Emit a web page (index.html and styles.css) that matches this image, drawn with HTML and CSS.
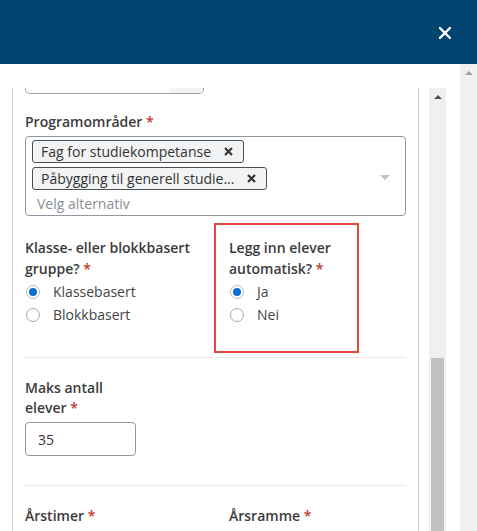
FILE: index.html
```html
<!DOCTYPE html>
<html>
<head>
  <title>Ny gruppe</title>
  <meta name="viewport" content="width=device-width, initial-scale=1">
  <link rel="stylesheet" href="styles.css">
</head>
<body>
  <header class="modal-header">
    <button class="close" aria-label="Lukk">
      <svg width="12" height="12" viewBox="0 0 12 12"><path d="M1 1L11 11M11 1L1 11" stroke="#fff" stroke-width="2.4" stroke-linecap="square"/></svg>
    </button>
  </header>

  <div class="modal-body">
    <div class="scroll-area">
      <div class="panel">
        <div class="input-tail"><span class="tail-addon"></span></div>

        <div class="field">
          <label class="label">Programområder <span class="req">*</span></label>
          <div class="multiselect">
            <div class="tags">
              <span class="tag">Fag for studiekompetanse <i class="tag-x"><svg width="9" height="9" viewBox="0 0 9 9"><path d="M1 1L8 8M8 1L1 8" stroke="#333" stroke-width="2.1"/></svg></i></span>
              <span class="tag">Påbygging til generell studie... <i class="tag-x"><svg width="9" height="9" viewBox="0 0 9 9"><path d="M1 1L8 8M8 1L1 8" stroke="#333" stroke-width="2.1"/></svg></i></span>
              <span class="placeholder">Velg alternativ</span>
            </div>
            <span class="caret"></span>
          </div>
        </div>

        <div class="two-col">
          <div class="field">
            <label class="label">Klasse- eller blokkbasert <span class="keep">gruppe? <span class="req">*</span></span></label>
            <div class="radios">
              <label class="radio"><span class="dot checked"></span>Klassebasert</label>
              <label class="radio"><span class="dot"></span>Blokkbasert</label>
            </div>
          </div>
          <div class="field marked">
            <label class="label">Legg inn elever <span class="keep">automatisk? <span class="req">*</span></span></label>
            <div class="radios">
              <label class="radio"><span class="dot checked"></span>Ja</label>
              <label class="radio"><span class="dot"></span>Nei</label>
            </div>
          </div>
        </div>

        <hr class="divider">

        <div class="field narrow">
          <label class="label">Maks antall <span class="keep">elever <span class="req">*</span></span></label>
          <input class="text-input" type="text" value="35">
        </div>

        <hr class="divider second">

        <div class="two-col">
          <div class="field"><label class="label">Årstimer <span class="req">*</span></label></div>
          <div class="field"><label class="label">Årsramme <span class="req">*</span></label></div>
        </div>
      </div>

      <div class="scrollbar inner">
        <span class="arrow"></span>
        <span class="thumb"></span>
      </div>
    </div>

    <div class="scrollbar outer">
      <span class="arrow"></span>
    </div>
  </div>
</body>
</html>
```

FILE: styles.css
```css
body {
  margin: 0;
  font-family: "Open Sans", Arial, sans-serif;
  color: #3b3b3b;
  height: 531px;
  overflow: hidden;
}
.modal-header {
  height: 64px;
  background-color: #01446f;
  display: flex;
  align-items: center;
  justify-content: flex-end;
  padding-right: 26px;
}
.close {
  background: none;
  border: none;
  padding: 0;
  display: flex;
  margin-top: 1px;
}
.modal-body {
  display: flex;
  height: 467px;
}
.scroll-area {
  display: flex;
  width: 460px;
  padding: 24px 0 0 12px;
  box-sizing: border-box;
}
.panel {
  width: 407px;
  border-left: 1px solid #d2d2d2;
  border-right: 1px solid #d2d2d2;
  padding: 0 12px;
  box-sizing: border-box;
  overflow: hidden;
}
.input-tail {
  width: 179px;
  height: 6px;
  border: 1px solid #9aa3ad;
  border-top: none;
  border-radius: 0 0 5px 5px;
  box-sizing: border-box;
  display: flex;
  justify-content: flex-end;
  overflow: hidden;
}
.tail-addon {
  width: 34px;
  background-color: #f3f3f3;
}
.label {
  display: block;
  font-size: 14px;
  font-weight: 600;
  line-height: 21px;
  color: #3b3b3b;
}
.keep {
  display: inline-block;
  white-space: nowrap;
}
.req {
  color: #c0392b;
}
.input-tail + .field {
  margin-top: 17px;
}
.multiselect {
  margin-top: 4px;
  border: 1px solid #8c98a4;
  border-radius: 4px;
  display: flex;
  align-items: center;
  padding: 3px 6px 1px 6px;
}
.tags {
  flex: 1;
  display: flex;
  flex-direction: column;
  align-items: flex-start;
  gap: 4px;
}
.tag {
  display: flex;
  align-items: center;
  height: 23px;
  box-sizing: border-box;
  padding: 0 10px 0 8px;
  border: 1px solid #4a4f55;
  border-radius: 3px;
  background-color: #f1f3f5;
  font-size: 14px;
  color: #333;
}
.tag-x {
  display: flex;
  margin-left: 13px;
}
.placeholder {
  font-size: 14px;
  line-height: 20px;
  color: #8a8f94;
  padding-left: 5px;
}
.caret {
  width: 0;
  height: 0;
  border-left: 5px solid transparent;
  border-right: 5px solid transparent;
  border-top: 5px solid #c2c2c2;
  margin-right: 9px;
}
.two-col {
  display: grid;
  grid-template-columns: 204px 1fr;
  margin-top: 21px;
}
.radios {
  margin-top: 1px;
}
.radio {
  display: flex;
  align-items: center;
  height: 23px;
  font-size: 14px;
  color: #444;
}
.dot {
  width: 14px;
  height: 14px;
  border: 1px solid #a5a9ad;
  border-radius: 50%;
  box-sizing: border-box;
  margin: 0 13px 0 1px;
  display: flex;
  align-items: center;
  justify-content: center;
}
.dot.checked {
  border-color: #b5bcc4;
}
.dot.checked::after {
  content: "";
  width: 8px;
  height: 8px;
  border-radius: 50%;
  background-color: #0b6fd1;
}
.marked {
  position: relative;
}
/* red highlight frame around the auto-enrol question */
.marked::after {
  content: "";
  position: absolute;
  left: -15px;
  top: -14px;
  width: 145px;
  height: 130px;
  border: 2px solid #e2463e;
  box-sizing: border-box;
}
.divider {
  border: none;
  border-top: 1px solid #e8e8e8;
  margin: 31px 0 0 0;
}
.narrow {
  width: 110px;
  margin-top: 20px;
}
.narrow .label {
  line-height: 20px;
}
.text-input {
  display: block;
  margin-top: 4px;
  width: 111px;
  height: 34px;
  box-sizing: border-box;
  border: 1px solid #8c98a4;
  border-radius: 4px;
  padding: 0 12px;
  font-family: "Open Sans", Arial, sans-serif;
  font-size: 14px;
  color: #333;
}
.divider.second {
  margin-top: 29px;
}
.divider.second + .two-col {
  margin-top: 19px;
}
.scrollbar {
  width: 17px;
  background-color: #f0f0f0;
  display: flex;
  flex-direction: column;
  align-items: center;
}
.scrollbar .arrow {
  width: 0;
  height: 0;
  border-left: 4px solid transparent;
  border-right: 4px solid transparent;
  border-bottom: 4px solid #a3a3a3;
  margin-top: 7px;
}
.scrollbar.inner {
  margin-left: 10px;
}
.scrollbar.inner .arrow {
  border-bottom-color: #505050;
}
.thumb {
  width: 13px;
  background-color: #c1c1c1;
  margin-top: 259px;
  flex: 1;
}
.scrollbar.outer {
  margin-left: auto;
}
```
